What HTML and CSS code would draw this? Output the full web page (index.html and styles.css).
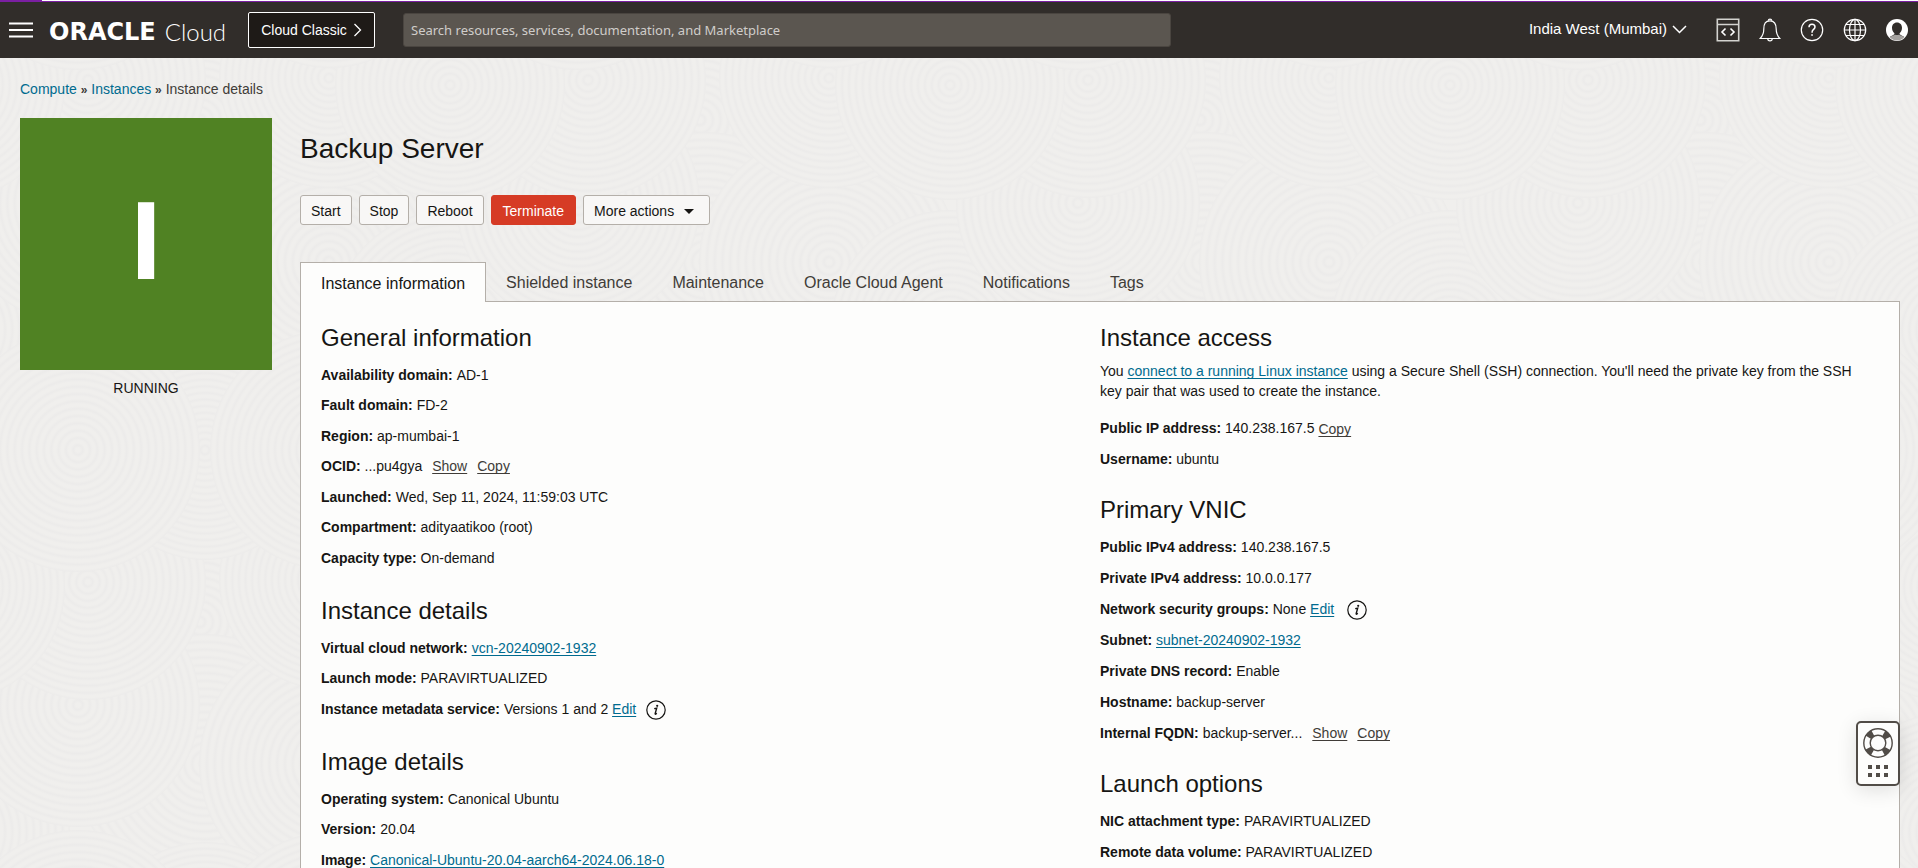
FILE: index.html
```
<!DOCTYPE html>
<html lang="en">
<head>
<meta charset="utf-8">
<title>Instance details</title>
<link rel="stylesheet" href="styles.css">
</head>
<body>
<div class="loadbar"><div class="loadbar-value"></div></div>
<header class="topbar">
  <button class="icon-button" aria-label="Navigation menu">
    <svg width="24" height="16" viewBox="0 0 24 16"><path d="M0 1.500h24M0 8h24M0 14.500h24" stroke="#fff" stroke-width="2"/></svg>
  </button>
  <a class="brand" href="#"><span class="brand-name">ORACLE</span><span class="brand-product">Cloud</span></a>
  <button class="classic">Cloud Classic
    <svg width="9" height="14" viewBox="0 0 9 14"><path d="M1.500 1l6 6-6 6" fill="none" stroke="#fff" stroke-width="1.300"/></svg>
  </button>
  <input class="search" type="search" aria-label="Search" placeholder="Search resources, services, documentation, and Marketplace">
  <div class="tools">
    <button class="region">India West (Mumbai)
      <svg width="15" height="9" viewBox="0 0 15 9"><path d="M1 1l6.500 6.500L14 1" fill="none" stroke="#fff" stroke-width="1.500"/></svg>
    </button>
    <button class="icon-button" aria-label="Developer tools">
      <svg width="24" height="24" viewBox="0 0 24 24" fill="none" stroke="#d4d3d0" stroke-width="1.600"><path d="M1.300 1.300h21.400v21.400H1.300zM1 6.500h22"/><path d="M9.500 10.500L6 14l3.500 3.500M14.500 10.500L18 14l-3.500 3.500" stroke="#fff"/></svg>
    </button>
    <button class="icon-button" aria-label="Announcements">
      <svg width="22" height="24" viewBox="0 0 22 24" fill="none" stroke="#fff" stroke-width="1.200"><path d="M1.200 20.500C3.500 18 4.800 15 4.800 11 4.800 5.500 6.500 2.800 11 2.800s6.200 2.700 6.200 8.200c0 4 1.300 7 3.600 9.500z"/><path d="M9.300 2.800a1.700 1.700 0 0 1 3.400 0M8.800 20.700a2.200 2.200 0 0 0 4.400 0"/></svg>
    </button>
    <button class="icon-button" aria-label="Help">
      <svg width="24" height="24" viewBox="0 0 24 24" fill="none" stroke="#fff" stroke-width="1.200"><circle cx="12" cy="12" r="10.700"/><path d="M9 9.300c0-2 1.300-3 3-3s3 1.100 3 2.800c0 2.300-2.900 2.400-2.900 5v.6" stroke-width="1.500"/><path d="M11.200 17h1.700" stroke-width="1.700"/></svg>
    </button>
    <button class="icon-button" aria-label="Language">
      <svg width="24" height="24" viewBox="0 0 24 24" fill="none" stroke="#fff" stroke-width="1.200"><circle cx="12" cy="12" r="10.700"/><ellipse cx="12" cy="12" rx="5.500" ry="10.700"/><path d="M12 1v22M1.300 12h21.400M3 6.500h18M3 17.500h18"/></svg>
    </button>
    <button class="icon-button" aria-label="Profile">
      <svg width="22" height="22" viewBox="0 0 22 22"><circle cx="11" cy="11" r="11" fill="#fff"/><path d="M11 3.500c3.200 0 5 2.300 5 5.300 0 2.400-1 4.300-2.500 5.500.2 1.700 1.500 2 4.500 3.500-1.800 2-4.200 3.200-7 3.200s-5.200-1.200-7-3.200c3-1.500 4.300-1.800 4.500-3.500C7 13.100 6 11.200 6 8.800c0-3 1.800-5.300 5-5.300z" fill="#312d2a"/><path d="M3.500 18c2.500-1.600 4.600-1.500 5.300-2.600 1.400.8 3 .8 4.400 0 .7 1.100 2.800 1 5.300 2.600a10 10 0 0 1-15 0z" fill="#a5a29f"/></svg>
    </button>
  </div>
</header>

<main class="page">
  <nav class="crumbs" aria-label="Breadcrumb"><a href="#">Compute</a> <b>»</b> <a href="#">Instances</a> <b>»</b> <span>Instance details</span></nav>
  <div class="layout">
    <aside class="status">
      <div class="status-tile">I</div>
      <div class="status-text">RUNNING</div>
    </aside>
    <div class="detail">
      <h1>Backup Server</h1>
      <div class="actions">
        <button class="action">Start</button>
        <button class="action">Stop</button>
        <button class="action">Reboot</button>
        <button class="action danger">Terminate</button>
        <button class="action more">More actions
          <svg width="10" height="5" viewBox="0 0 10 5"><path d="M0 0h10L5 5z" fill="#161513"/></svg>
        </button>
      </div>
      <div class="tabs" role="tablist">
        <button class="tab active" role="tab" aria-selected="true">Instance information</button>
        <button class="tab" role="tab">Shielded instance</button>
        <button class="tab" role="tab">Maintenance</button>
        <button class="tab" role="tab">Oracle Cloud Agent</button>
        <button class="tab" role="tab">Notifications</button>
        <button class="tab" role="tab">Tags</button>
      </div>
      <div class="panel">
        <div class="column column-left">
          <section>
            <h2>General information</h2>
            <dl>
              <div><dt>Availability domain:</dt> <dd>AD-1</dd></div>
              <div><dt>Fault domain:</dt> <dd>FD-2</dd></div>
              <div><dt>Region:</dt> <dd>ap-mumbai-1</dd></div>
              <div><dt>OCID:</dt> <dd>...pu4gya<a class="quiet" href="#">Show</a><a class="quiet" href="#">Copy</a></dd></div>
              <div><dt>Launched:</dt> <dd>Wed, Sep 11, 2024, 11:59:03 UTC</dd></div>
              <div><dt>Compartment:</dt> <dd>adityaatikoo (root)</dd></div>
              <div><dt>Capacity type:</dt> <dd>On-demand</dd></div>
            </dl>
          </section>
          <section>
            <h2>Instance details</h2>
            <dl>
              <div><dt>Virtual cloud network:</dt> <dd><a href="#">vcn-20240902-1932</a></dd></div>
              <div><dt>Launch mode:</dt> <dd>PARAVIRTUALIZED</dd></div>
              <div><dt>Instance metadata service:</dt> <dd>Versions 1 and 2 <a href="#">Edit</a><button class="info" aria-label="More information"><svg width="20" height="20" viewBox="0 0 20 20"><circle cx="10" cy="10" r="9.200" fill="none" stroke="#161513" stroke-width="1.200"/><path d="M8.200 8.600l2.500-.4-1.500 5.300q-.2.900.5.600l1.100-.9" fill="none" stroke="#161513" stroke-width="1.400"/><circle cx="11.200" cy="5.800" r="1.100" fill="#161513"/></svg></button></dd></div>
            </dl>
          </section>
          <section>
            <h2>Image details</h2>
            <dl>
              <div><dt>Operating system:</dt> <dd>Canonical Ubuntu</dd></div>
              <div><dt>Version:</dt> <dd>20.04</dd></div>
              <div><dt>Image:</dt> <dd><a href="#">Canonical-Ubuntu-20.04-aarch64-2024.06.18-0</a></dd></div>
            </dl>
          </section>
        </div>
        <div class="column column-right">
          <section>
            <h2>Instance access</h2>
            <p>You <a href="#">connect to a running Linux instance</a> using a Secure Shell (SSH) connection. You'll need the private key from the SSH key pair that was used to create the instance.</p>
            <dl>
              <div><dt>Public IP address:</dt> <dd>140.238.167.5 <a class="copy" href="#">Copy</a></dd></div>
              <div><dt>Username:</dt> <dd>ubuntu</dd></div>
            </dl>
          </section>
          <section>
            <h2>Primary VNIC</h2>
            <dl>
              <div><dt>Public IPv4 address:</dt> <dd>140.238.167.5</dd></div>
              <div><dt>Private IPv4 address:</dt> <dd>10.0.0.177</dd></div>
              <div><dt>Network security groups:</dt> <dd>None <a href="#">Edit</a><button class="info" aria-label="More information"><svg width="20" height="20" viewBox="0 0 20 20"><circle cx="10" cy="10" r="9.200" fill="none" stroke="#161513" stroke-width="1.200"/><path d="M8.200 8.600l2.500-.4-1.500 5.300q-.2.900.5.600l1.100-.9" fill="none" stroke="#161513" stroke-width="1.400"/><circle cx="11.200" cy="5.800" r="1.100" fill="#161513"/></svg></button></dd></div>
              <div><dt>Subnet:</dt> <dd><a href="#">subnet-20240902-1932</a></dd></div>
              <div><dt>Private DNS record:</dt> <dd>Enable</dd></div>
              <div><dt>Hostname:</dt> <dd>backup-server</dd></div>
              <div><dt>Internal FQDN:</dt> <dd>backup-server...<a class="quiet" href="#">Show</a><a class="quiet" href="#">Copy</a></dd></div>
            </dl>
          </section>
          <section>
            <h2>Launch options</h2>
            <dl>
              <div><dt>NIC attachment type:</dt> <dd>PARAVIRTUALIZED</dd></div>
              <div><dt>Remote data volume:</dt> <dd>PARAVIRTUALIZED</dd></div>
            </dl>
          </section>
        </div>
      </div>
    </div>
  </div>
</main>

<button class="support" aria-label="Support">
  <svg width="30" height="30" viewBox="0 0 30 30" fill="none" stroke="#514c47"><circle cx="15" cy="15" r="11" stroke-width="7" stroke-dasharray="6 11.279" stroke-dashoffset="-5.640"/><circle cx="15" cy="15" r="14.200" stroke-width="1.400"/><circle cx="15" cy="15" r="7.800" stroke-width="1.400" fill="#fdfdfc"/></svg>
  <svg width="20" height="12" viewBox="0 0 20 12" fill="#514c47"><path d="M0 0h4v4H0zM8 0h4v4H8zM16 0h4v4h-4zM0 8h4v4H0zM8 8h4v4H8zM16 8h4v4h-4z"/></svg>
</button>
</body>
</html>
```
FILE: styles.css
```
* { box-sizing: border-box; }

body {
  margin: 0;
  height: 100vh;
  display: flex;
  flex-direction: column;
  overflow: hidden;
  color: #161513;
  font: 14px/20px "Liberation Sans", Arial, sans-serif;
  background: #f0efed url("data:image/svg+xml,%3Csvg xmlns='http://www.w3.org/2000/svg' width='500' height='502'%3E%3Cdefs%3E%3CradialGradient id='g' r='.03' spreadMethod='repeat'%3E%3Cstop offset='0' stop-color='%23f0efed'/%3E%3Cstop offset='.3' stop-color='%23f0efed'/%3E%3Cstop offset='.65' stop-color='%23ecebea'/%3E%3Cstop offset='1' stop-color='%23f0efed'/%3E%3C/radialGradient%3E%3C/defs%3E%3Cg fill='url(%23g)'%3E%3Ccircle cx='200' cy='120' r='130'/%3E%3Ccircle cx='205' cy='262' r='130'/%3E%3Ccircle cx='329' cy='262' r='130'/%3E%3Ccircle cx='450' cy='330' r='120'/%3E%3Ccircle cx='-50' cy='330' r='120'/%3E%3Ccircle cx='78' cy='203' r='122'/%3E%3Ccircle cx='578' cy='203' r='122'/%3E%3Ccircle cx='88' cy='80' r='118'/%3E%3Ccircle cx='588' cy='80' r='118'/%3E%3Ccircle cx='329' cy='78' r='110'/%3E%3Ccircle cx='450' cy='85' r='115'/%3E%3Ccircle cx='-50' cy='85' r='115'/%3E%3Ccircle cx='205' cy='450' r='110'/%3E%3Ccircle cx='205' cy='-52' r='110'/%3E%3Ccircle cx='330' cy='450' r='120'/%3E%3Ccircle cx='330' cy='-52' r='120'/%3E%3Ccircle cx='78' cy='450' r='122'/%3E%3Ccircle cx='578' cy='450' r='122'/%3E%3Ccircle cx='78' cy='-52' r='122'/%3E%3Ccircle cx='578' cy='-52' r='122'/%3E%3C/g%3E%3C/svg%3E");
}

button {
  margin: 0;
  padding: 0;
  border: 0;
  background: none;
  color: inherit;
  font: inherit;
  cursor: pointer;
}

svg { display: block; flex: none; }

a {
  color: #006b8f;
  text-decoration: underline 1px;
  text-underline-offset: 2px;
  text-decoration-skip-ink: none;
}

/* Top bar */
.loadbar { flex: none; height: 2px; background: #fff; border-bottom: 1px solid #7b1fa2; }
.loadbar-value { width: 42px; height: 1px; background: #7b1fa2; }

.topbar {
  flex: none;
  display: flex;
  align-items: center;
  height: 56px;
  padding: 0 10px 0 9px;
  background: #312d2a;
  color: #fff;
}

.brand {
  display: flex;
  align-items: center;
  width: 178px;
  margin: 4px 0 0 16px;
  gap: 9px;
  color: #fff;
  text-decoration: none;
}
.brand-name { font: bold 24px/28px "DejaVu Sans", sans-serif; }
.brand-product { font: 300 24px/28px Lato, sans-serif; }

.classic {
  flex: none;
  display: flex;
  align-items: center;
  justify-content: center;
  gap: 6px;
  width: 127px;
  height: 36px;
  margin: 0 28px 0 21px;
  border: 1px solid #fff;
  border-radius: 2px;
  background: #1e1a17;
}

.search {
  flex: 0 1 768px;
  height: 34px;
  padding: 0 7px;
  border: 1px solid #4a4540;
  border-radius: 3px;
  background: #5b5650;
  color: #fff;
  font: 13px/20px "Noto Sans", sans-serif;
}
.search::placeholder { color: #d0cdca; opacity: 1; }

.tools { display: flex; align-items: center; gap: 19px; margin-left: auto; }
.region { display: flex; align-items: center; gap: 5px; margin-right: 10px; padding-bottom: 2px; font-size: 15px; }

/* Page */
.page { flex: 1; min-height: 0; padding: 21px 18px 0 20px; }
.crumbs { margin-bottom: 18px; color: #403c38; }
.crumbs a { text-decoration: none; }
.crumbs b { font-size: 12px; }

.layout { display: flex; gap: 28px; }
.status { flex: none; width: 252px; text-align: center; }
.status-tile {
  height: 252px;
  background: #508223;
  color: #fff;
  font-size: 112px;
  font-weight: bold;
  line-height: 246px;
}
.status-text { margin-top: 8px; }

.detail { flex: 1; min-width: 0; }
h1 { margin: 13px 0 28px; font-size: 28px; line-height: 36px; font-weight: normal; }

.actions { display: flex; gap: 7px; margin-bottom: 37px; }
.action {
  display: flex;
  align-items: center;
  gap: 10px;
  height: 30px;
  padding: 2px 10px 0;
  border: 1px solid #b4afa9;
  border-radius: 3px;
  background: #f8f7f6;
}
.danger { padding: 2px 11px 0; border-color: #d63b25; background: #d63b25; color: #fff; }
.more { padding-right: 15px; }

.tabs { display: flex; align-items: flex-end; }
.tab { height: 39px; padding: 2px 20px 0; color: #403c38; font-size: 16px; }
.tab.active {
  height: 40px;
  margin-bottom: -1px;
  border: 1px solid #b4afa9;
  border-bottom: 0;
  background: #fdfdfc;
  color: #161513;
  z-index: 1;
}

.panel {
  display: grid;
  grid-template-columns: 1fr 1fr;
  padding: 21px 20px 16px;
  border: 1px solid #b4afa9;
  background: #fdfdfc;
}

section + section { margin-top: 26px; }
h2 { margin: 0 0 12px; font-size: 24px; line-height: 30px; font-weight: normal; }
p { margin: 0 0 17px; padding-right: 20px; }
h2:has(+ p) { margin-bottom: 8px; }
dl { display: flex; flex-direction: column; gap: 11px; margin: 0; }
dl > div { height: 20px; white-space: nowrap; }
dt, dd { display: inline; margin: 0; }
dt { font-weight: bold; }
.column-left section + section { margin-top: 28px; }
.column-left dl > div:nth-child(even) { margin-top: -1px; }

.quiet { margin-left: 10px; color: #403c38; }
.copy { display: inline-block; vertical-align: middle; color: #403c38; }
.info { display: inline-block; margin-left: 10px; vertical-align: middle; }
.column-right .info { margin-left: 13px; }

/* Floating support widget */
.support {
  position: fixed;
  right: 18px;
  bottom: 82px;
  display: flex;
  flex-direction: column;
  align-items: center;
  gap: 7px;
  padding: 5px;
  width: 44px;
  height: 65px;
  border: 2px solid #514c47;
  border-radius: 5px;
  background: #fdfdfc;
  box-shadow: 0 4px 20px rgba(0, 0, 0, .12);
}
```
